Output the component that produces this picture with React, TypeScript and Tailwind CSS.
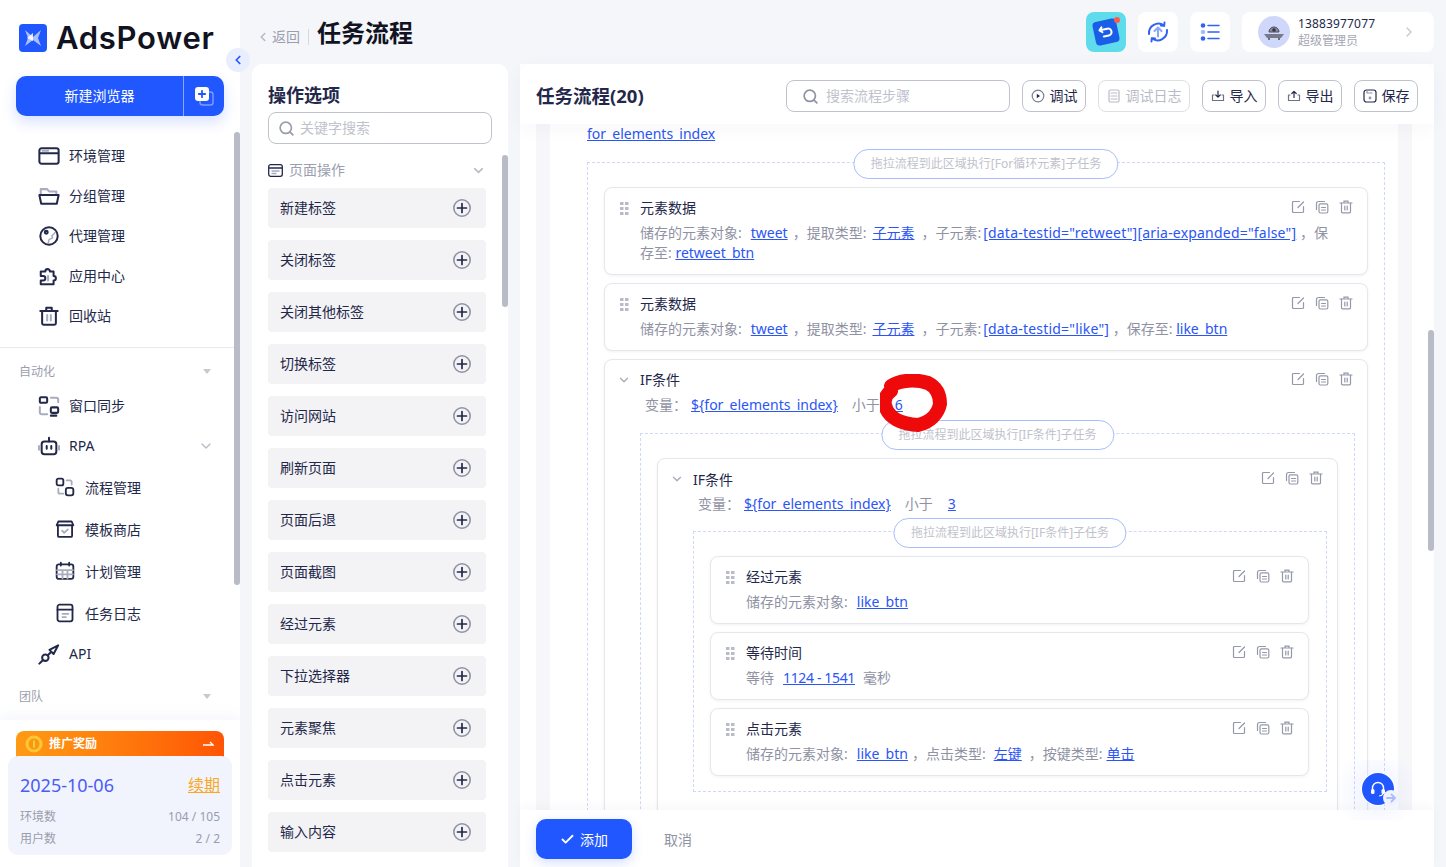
import { Check, ChevronDown, ChevronLeft, ChevronRight, Search } from "lucide-react";
import type { ReactNode } from "react";

const navy = "#23284a";
const soft = "#a9acbd";

function Ico({ children, size = 22 }: { children: ReactNode; size?: number }) {
  return (
    <svg width={size} height={size} viewBox="0 0 24 24" fill="none" stroke={navy} strokeWidth="2.200" strokeLinecap="round" strokeLinejoin="round" aria-hidden>
      {children}
    </svg>
  );
}

function navIcon(name: string, size: number): ReactNode {
  switch (name) {
    case "env":
      return (
        <Ico size={size}>
          <rect x="1.500" y="3.500" width="21" height="17" rx="2.500" />
          <path d="M2 9h20" />
          <path d="M5 6.300h6" stroke={soft} strokeDasharray="1.500 1" />
        </Ico>
      );
    case "group":
      return (
        <Ico size={size}>
          <path d="M3 10V4.500h7l2 2.500h8v3" stroke={soft} />
          <path d="M1.500 11h21l-2 9.500h-17z" />
        </Ico>
      );
    case "proxy":
      return (
        <Ico size={size}>
          <circle cx="12" cy="12" r="9.500" />
          <circle cx="9" cy="8" r="1.600" />
          <path d="M19 8l-4 4 1 2-4 2-1 4" stroke={soft} strokeWidth="1.600" />
        </Ico>
      );
    case "apps":
      return (
        <Ico size={size}>
          <path d="M3 7h5a2.500 2.500 0 1 1 5 0h4v5a2.500 2.500 0 1 1 0 5v4H3v-4h2.500a2.500 2.500 0 0 0 0-5H3z" />
          <path d="M11 12v5" stroke={soft} />
        </Ico>
      );
    case "trash":
      return (
        <Ico size={size}>
          <path d="M2.500 6.500h19M9 6V3h6v3" />
          <path d="M4.500 7v13a1.500 1.500 0 0 0 1.500 1.500h12a1.500 1.500 0 0 0 1.500-1.500V7" />
          <path d="M10 11v6M14 11v6" stroke={soft} />
        </Ico>
      );
    case "sync":
      return (
        <Ico size={size}>
          <rect x="2" y="2.500" width="8" height="6" rx="1.200" />
          <rect x="14" y="13.500" width="8" height="6" rx="1.200" />
          <path d="M14 3h6a2 2 0 0 1 2 2v3M10 21H4a2 2 0 0 1-2-2v-6" stroke={soft} />
          <path d="M14 22.500h6" />
        </Ico>
      );
    case "rpa":
      return (
        <Ico size={size}>
          <rect x="4" y="7" width="16" height="14" rx="3" />
          <path d="M12 3v4M9.500 12v3M14.500 12v3" />
          <path d="M1 12v4M23 12v4" stroke={soft} />
        </Ico>
      );
    case "flow":
      return (
        <Ico size={size}>
          <rect x="2" y="2" width="8" height="8" rx="2" />
          <rect x="13" y="13" width="9" height="9" rx="2.500" />
          <path d="M14 4h4a2 2 0 0 1 2 2v3M10 20H6a2 2 0 0 1-2-2v-4" stroke={soft} />
        </Ico>
      );
    case "store":
      return (
        <Ico size={size}>
          <path d="M2 7.500 4 3h16l2 4.500z" />
          <path d="M3.500 8v12a1.500 1.500 0 0 0 1.500 1.500h14a1.500 1.500 0 0 0 1.500-1.500V8" />
          <path d="m8.500 14 2.500 2.500 4.500-4" stroke={soft} />
        </Ico>
      );
    case "plan":
      return (
        <Ico size={size}>
          <rect x="2" y="4" width="20" height="17.500" rx="2.500" />
          <path d="M7 2v3.500M17 2v3.500" />
          <path d="M2.500 11h19M2.500 16h19M9 11v10M15 11v10" stroke={soft} />
        </Ico>
      );
    case "log":
      return (
        <Ico size={size}>
          <rect x="3" y="2" width="18" height="20" rx="2.500" />
          <path d="M3 8h18" />
          <path d="M9 13h7M9 17h4" stroke={soft} />
        </Ico>
      );
    default:
      return (
        <Ico size={size}>
          <path d="m1.500 22.500 4-4" />
          <circle cx="8" cy="16" r="3.500" />
          <path d="m11 13 3-3" />
          <path d="m12.500 7.500 4.500 4.500 5-9.500z" />
        </Ico>
      );
  }
}

function NavRow({ icon, label, sub, arrow }: { icon: string; label: string; sub?: boolean; arrow?: boolean }) {
  return (
    <div className={`flex items-center ${sub ? "h-[42px] pl-[53px]" : "h-10 pl-[37px]"} pr-[26px]`}>
      <div className="flex w-6 shrink-0 justify-center">{navIcon(icon, sub ? 20 : 22)}</div>
      <span className={`ml-[8px] text-[14px] text-[#23284a] ${sub ? "" : "pb-[2px]"}`}>{label}</span>
      {arrow && <ChevronDown className="ml-auto" size={16} color="#b9bbc6" />}
    </div>
  );
}

function SectionLabel({ label }: { label: string }) {
  return (
    <div className="flex h-6 items-center justify-between pl-[19px] pr-[29px]">
      <span className="pt-[1px] text-[12px] text-[#9b9eae]">{label}</span>
      <span className="h-0 w-0 border-x-[4px] border-t-[5px] border-x-transparent border-t-[#c6c8d2]" />
    </div>
  );
}

function Sidebar() {
  return (
    <aside className="relative z-10 flex h-full w-[240px] shrink-0 flex-col bg-white">
      <div className="flex h-[76px] items-start gap-[9px] pl-[19px] pt-[24px]">
        <svg width="28" height="28" viewBox="0 0 28 28" aria-hidden>
          <rect width="28" height="28" rx="4" fill="#2157ff" />
          <path d="M6 6 14 13 22 6 19 14 22 22 14 16 6 22 9 14z" fill="#a9c0ff" />
          <path d="M14 9 8 14l6 3z" fill="#fff" opacity=".85" />
        </svg>
        <span className="text-[31px] font-semibold leading-[28px] tracking-[0.7px] text-[#111322] font-['Inter',sans-serif]">AdsPower</span>
      </div>
      <div className="mx-4 flex h-10 shrink-0 items-stretch rounded-[10px] bg-[#2157ff] text-white shadow-[0_6px_14px_rgba(33,87,255,0.18)]">
        <div className="flex flex-1 items-center justify-center pb-[2px] text-[14px]">新建浏览器</div>
        <div className="flex w-[41px] items-center justify-center border-l border-[#8aa6ff]">
          <svg width="20" height="20" viewBox="0 0 20 20" aria-hidden>
            <rect x="6" y="6" width="13" height="13" rx="2.500" fill="none" stroke="#7f9dff" strokeWidth="1.400" />
            <rect x="1" y="1" width="14" height="14" rx="3" fill="#fff" />
            <path d="M8 4.800v6.400M4.800 8h6.400" stroke="#2157ff" strokeWidth="1.800" strokeLinecap="round" />
          </svg>
        </div>
      </div>
      <div className="min-h-0 flex-1 overflow-hidden pt-5">
        <NavRow icon="env" label="环境管理" />
        <NavRow icon="group" label="分组管理" />
        <NavRow icon="proxy" label="代理管理" />
        <NavRow icon="apps" label="应用中心" />
        <NavRow icon="trash" label="回收站" />
        <div className="mt-[11px] border-t border-[#e8e9ee] pt-[11px]">
          <SectionLabel label="自动化" />
          <div className="mt-[3px]">
            <NavRow icon="sync" label="窗口同步" />
            <NavRow icon="rpa" label="RPA" arrow />
            <NavRow icon="flow" label="流程管理" sub />
            <NavRow icon="store" label="模板商店" sub />
            <NavRow icon="plan" label="计划管理" sub />
            <NavRow icon="log" label="任务日志" sub />
            <NavRow icon="api" label="API" />
          </div>
          <div className="mt-[10px]">
            <SectionLabel label="团队" />
          </div>
        </div>
      </div>
      <div className="h-[147px] shrink-0 bg-white pt-[11px] shadow-[0_-6px_10px_rgba(245,246,250,0.8)]">
        <div className="mx-4 flex h-[29px] items-start justify-between rounded-t-[8px] bg-gradient-to-r from-[#ff9a14] to-[#ff5405] pl-2 pr-[10px] pt-[3px] text-white">
          <div className="flex items-center gap-[5px]">
            <svg width="20" height="20" viewBox="0 0 20 20" aria-hidden>
              <circle cx="10" cy="10" r="8.500" fill="#ffc53a" />
              <circle cx="10" cy="10" r="5.500" fill="#f79a0a" />
              <path d="M10 6.500v7" stroke="#ffd766" strokeWidth="1.500" />
            </svg>
            <span className="text-[12px] font-bold">推广奖励</span>
          </div>
          <svg className="mt-[6px]" width="12" height="8" viewBox="0 0 12 8" fill="none" stroke="#fff" strokeWidth="1.300" aria-hidden>
            <path d="M1 5h10L8 2" />
          </svg>
        </div>
        <div className="mx-2 -mt-1 h-[99px] rounded-[10px] bg-[#f1f4fd] px-3 pt-[16px]">
          <div className="flex h-[26px] items-center justify-between">
            <span className="text-[18px] text-[#4b5cf5]">2025-10-06</span>
            <span className="text-[16px] text-[#f9a825] underline">续期</span>
          </div>
          <div className="mt-[8px] flex h-[22px] items-center justify-between text-[12px] text-[#9a9dab]">
            <span>环境数</span>
            <span>104 / 105</span>
          </div>
          <div className="flex h-[22px] items-center justify-between text-[12px] text-[#9a9dab]">
            <span>用户数</span>
            <span>2 / 2</span>
          </div>
        </div>
      </div>
      <div className="absolute right-0 top-[132px] h-[453px] w-[6px] rounded-full bg-[#b9bbc6]" />
      <div className="absolute left-[226px] top-[48px] flex h-6 w-6 items-center justify-center rounded-full bg-[#e9eeff]">
        <ChevronLeft size={14} color="#2157ff" strokeWidth={3} />
      </div>
    </aside>
  );
}

function TopBar() {
  return (
    <header className="flex h-16 shrink-0 items-center pl-4">
      <ChevronLeft className="mt-[10px]" size={14} color="#b5b7c4" strokeWidth={2.500} />
      <span className="ml-[2px] mt-[8px] text-[14px] text-[#9b9eae]">返回</span>
      <span className="ml-[8px] mt-[10px] h-4 w-px bg-[#d8d9e0]" />
      <span className="ml-[8px] mt-[1px] text-[24px] font-bold leading-8 text-[#111322]">任务流程</span>
      <div className="ml-auto flex items-center gap-3">
        <div className="relative flex h-10 w-10 items-center justify-center rounded-[8px] bg-[#5edcec]">
          <div className="flex h-6 w-6 rotate-[-12deg] items-center justify-center rounded-[4px] bg-[#1a5ee8]">
            <svg width="16" height="16" viewBox="0 0 16 16" fill="none" stroke="#fff" strokeWidth="2" strokeLinecap="round" strokeLinejoin="round" aria-hidden>
              <path d="M2 5h8a3.500 3.500 0 0 1 0 7H5M4.500 2.500 2 5l2.500 2.500" />
            </svg>
          </div>
          <span className="absolute right-[6px] top-[5px] h-[6px] w-[6px] rounded-full bg-[#ff5a45]" />
        </div>
        <div className="flex h-10 w-10 items-center justify-center rounded-[8px] bg-white">
          <svg width="24" height="24" viewBox="0 0 24 24" fill="none" stroke="#2f62f5" strokeWidth="2" strokeLinecap="round" strokeLinejoin="round" aria-hidden>
            <path d="M3 14a9.500 9.500 0 0 1 15-8.500M21 10a9.500 9.500 0 0 1-15 8.500" />
            <path d="m18.500 2.500-.3 3.300-3.300-.3M5.500 21.500l.3-3.300 3.300.3" />
            <path d="M12 16.500V8M8.500 11 12 7.500l3.500 3.500" stroke="#8aa6ff" />
          </svg>
        </div>
        <div className="flex h-10 w-10 items-center justify-center rounded-[8px] bg-white">
          <svg width="20" height="20" viewBox="0 0 20 20" fill="none" aria-hidden>
            <circle cx="3" cy="3.500" r="2.300" fill="#2f62f5" />
            <circle cx="3" cy="10" r="2.300" fill="#a9bdfa" />
            <circle cx="3" cy="16.500" r="2.300" fill="#2f62f5" />
            <path d="M8 3.500h11M8 10h11M8 16.500h11" stroke="#2f62f5" strokeWidth="1.600" strokeLinecap="round" />
          </svg>
        </div>
        <div className="flex h-10 w-[192px] items-center rounded-[8px] bg-white pl-4 pr-[17px]">
          <div className="flex h-8 w-8 shrink-0 items-center justify-center rounded-full bg-[#cfd8fa]">
            <svg width="24" height="24" viewBox="0 0 24 24" aria-hidden>
              <path d="M7 12a5 5 0 0 1 10 0z" fill="#8b8e9c" stroke="#4a4d5c" strokeWidth="1" />
              <path d="M2 14h20l-3 4H5z" fill="#77798a" />
              <circle cx="12" cy="10" r="1.800" fill="#33364a" />
              <path d="M7 18v2M17 18v2" stroke="#4a4d5c" strokeWidth="1.500" />
            </svg>
          </div>
          <div className="ml-2 flex flex-col">
            <span className="text-[12px] leading-[17px] tracking-[0.15px] text-[#23284a]">13883977077</span>
            <span className="text-[12px] leading-[17px] text-[#a3a6b4]">超级管理员</span>
          </div>
          <ChevronRight className="ml-auto" size={16} color="#c6c8d2" />
        </div>
      </div>
    </header>
  );
}

const operations = ["新建标签", "关闭标签", "关闭其他标签", "切换标签", "访问网站", "刷新页面", "页面后退", "页面截图", "经过元素", "下拉选择器", "元素聚焦", "点击元素", "输入内容"];

function OptionsPanel() {
  return (
    <section className="relative w-[256px] shrink-0 overflow-hidden rounded-t-[10px] bg-white px-4 pt-[18px]">
      <h2 className="text-[18px] font-bold leading-[26px] text-[#23284a]">操作选项</h2>
      <div className="mt-1 flex h-8 items-center rounded-[8px] border border-[#c0c2cc] pl-[9px]">
        <Search size={17} color="#9a9dab" strokeWidth={2.400} />
        <span className="ml-[5px] pb-[2px] text-[14px] text-[#c0c2cc]">关键字搜索</span>
      </div>
      <div className="mt-[15px] flex h-[22px] items-center pr-[6px]">
        <svg width="15" height="13" viewBox="0 0 15 13" fill="none" stroke={navy} strokeWidth="1.300" aria-hidden>
          <rect x=".7" y=".7" width="13.600" height="11.600" rx="2" />
          <path d="M1 4h13" />
          <path d="M3.500 7h8M3.500 9.500h5" stroke={soft} />
        </svg>
        <span className="ml-[6px] pb-[2px] text-[14px] text-[#9b9eae]">页面操作</span>
        <ChevronDown className="ml-auto" size={15} color="#b9bbc6" strokeWidth={2.500} />
      </div>
      <div className="mt-[7px] flex w-[218px] flex-col gap-3">
        {operations.map((op) => (
          <div key={op} className="flex h-10 shrink-0 items-center justify-between rounded-[4px] bg-[#f3f3f5] pl-3 pr-[15px]">
            <span className="pb-[2px] text-[14px] text-[#23284a]">{op}</span>
            <svg width="18" height="18" viewBox="0 0 18 18" fill="none" aria-hidden>
              <circle cx="9" cy="9" r="8.200" stroke="#8f92a3" strokeWidth="1.600" />
              <path d="M9 4.500v9M4.500 9h9" stroke={navy} strokeWidth="1.700" strokeLinecap="round" />
            </svg>
          </div>
        ))}
      </div>
      <div className="absolute right-0 top-[91px] h-[152px] w-[6px] rounded-full bg-[#b9bbc6]" />
    </section>
  );
}

function ToolButton({ icon, label, off, wide }: { icon: ReactNode; label: string; off?: boolean; wide?: boolean }) {
  return (
    <div className={`flex h-8 items-center justify-center gap-[5px] rounded-[8px] border text-[14px] ${wide ? "w-[92px]" : "w-16"} ${off ? "border-[#dfe0e6] text-[#b9bbc6]" : "border-[#c0c2cc] text-[#23284a]"}`}>
      {icon}
      <span className="pb-[2px]">{label}</span>
    </div>
  );
}

function FlowHeader() {
  const s = { width: 14, height: 14, viewBox: "0 0 14 14", fill: "none", strokeWidth: 1.200, strokeLinecap: "round" as const, strokeLinejoin: "round" as const };
  return (
    <div className="relative z-20 flex h-[60px] shrink-0 items-center rounded-t-[10px] bg-white pl-4 pr-4 pt-1 shadow-[0_4px_20px_rgba(30,40,90,0.04)]">
      <h2 className="text-[18.500px] font-bold text-[#23284a]">任务流程(20)</h2>
      <div className="ml-auto mr-3 flex h-8 w-[224px] items-center rounded-[8px] border border-[#c0c2cc] pl-[15px]">
        <Search size={17} color="#8f92a3" strokeWidth={2.400} />
        <span className="ml-[7px] pb-[2px] text-[14px] text-[#c0c2cc]">搜索流程步骤</span>
      </div>
      <div className="flex gap-3">
        <ToolButton
          label="调试"
          icon={
            <svg {...s} stroke="#7d8092">
              <circle cx="7" cy="7" r="5.800" />
              <path d="M5.800 4.800 9 7l-3.200 2.200z" fill={navy} stroke="none" />
            </svg>
          }
        />
        <ToolButton
          off
          wide
          label="调试日志"
          icon={
            <svg {...s} stroke="#b9bbc6">
              <rect x="2" y="1" width="10" height="12" rx="1.500" />
              <path d="M4 4h6M4 7h6M4 10h6" />
            </svg>
          }
        />
        <ToolButton
          label="导入"
          icon={
            <svg {...s} stroke="#6f7284">
              <path d="M3 6H1.500v5.500h11V6H11" />
              <path d="M7 2v6M4.800 6 7 8.200 9.200 6" stroke={navy} />
            </svg>
          }
        />
        <ToolButton
          label="导出"
          icon={
            <svg {...s} stroke="#6f7284">
              <path d="M3 6H1.500v5.500h11V6H11" />
              <path d="M7 8.500V2.500M4.800 4.500 7 2.300l2.200 2.200" stroke={navy} />
            </svg>
          }
        />
        <ToolButton
          label="保存"
          icon={
            <svg {...s} stroke={navy}>
              <rect x="1" y="1" width="12" height="12" rx="2.500" />
              <path d="M4 1.500v2.500h5" stroke="#8f92a3" />
              <circle cx="7" cy="9" r=".8" stroke="#8f92a3" />
            </svg>
          }
        />
      </div>
    </div>
  );
}

function Lnk({ children, className = "" }: { children: ReactNode; className?: string }) {
  return <span className={`text-[#2b55f5] underline ${className}`}>{children}</span>;
}

function CardActions() {
  return (
    <div className="absolute right-[14px] top-[12px] flex gap-[10px]">
      <svg width="14" height="14" viewBox="0 0 14 14" fill="none" stroke="#9598a8" strokeWidth="1.200" strokeLinecap="round" aria-hidden>
        <path d="M12.500 6.500v5a1 1 0 0 1-1 1h-9a1 1 0 0 1-1-1v-9a1 1 0 0 1 1-1h6" />
        <path d="m7 7.500 5.500-5.500" />
      </svg>
      <svg width="14" height="14" viewBox="0 0 14 14" fill="none" stroke="#9598a8" strokeWidth="1.200" strokeLinecap="round" aria-hidden>
        <path d="M9.500 1.500h-6a2 2 0 0 0-2 2v6" />
        <rect x="4" y="3.800" width="8.800" height="9.200" rx="1.500" />
        <path d="M6.500 7.500h4M6.500 10h4" />
      </svg>
      <svg width="14" height="14" viewBox="0 0 14 14" fill="none" stroke="#9598a8" strokeWidth="1.200" strokeLinecap="round" aria-hidden>
        <path d="M1 3h12M5 3V1.200h4V3" />
        <path d="M2.500 3v8.800a1 1 0 0 0 1 1h7a1 1 0 0 0 1-1V3" />
        <path d="M5.800 6v4M8.200 6v4" />
      </svg>
    </div>
  );
}

function Grip() {
  return (
    <svg className="absolute left-[15px] top-[14px]" width="9" height="13" viewBox="0 0 9 13" fill="#b9bbc6" aria-hidden>
      <rect width="3.500" height="3" />
      <rect x="5" width="3.500" height="3" />
      <rect y="5" width="3.500" height="3" />
      <rect x="5" y="5" width="3.500" height="3" />
      <rect y="10" width="3.500" height="3" />
      <rect x="5" y="10" width="3.500" height="3" />
    </svg>
  );
}

function StepCard({ title, children }: { title: string; children: ReactNode }) {
  return (
    <div className="relative rounded-[8px] border border-[#e6e7ec] bg-white pb-[11px] pl-[35px] pr-[26px] pt-[10px] shadow-[0_1px_3px_rgba(30,40,90,0.06)]">
      <Grip />
      <CardActions />
      <div className="text-[14px] leading-5 text-[#23284a]">{title}</div>
      <div className="mt-[5px] text-[14px] leading-5 text-[#8f92a3]">{children}</div>
    </div>
  );
}

function DropZone({ label, children, className = "" }: { label: string; children: ReactNode; className?: string }) {
  return (
    <div className={`relative border border-dashed border-[#cfd8fb] pl-4 pt-6 ${className}`}>
      <div className="absolute left-1/2 top-[-14px] flex h-[30px] -translate-x-1/2 items-center whitespace-nowrap rounded-full border border-[#a9bdfa] bg-white px-[16.500px] text-[12px] text-[#c0c2cc]">
        {label}
      </div>
      {children}
    </div>
  );
}

function IfCard({ value, inner, children }: { value: string; inner?: boolean; children: ReactNode }) {
  return (
    <div className={`relative rounded-[8px] border border-[#e6e7ec] bg-white shadow-[0_1px_3px_rgba(30,40,90,0.06)] ${inner ? "pb-10 pt-[11px]" : "pt-[10px]"}`}>
      <CardActions />
      <ChevronDown className="absolute left-[12px] top-[13px]" size={14} color="#a9acbd" strokeWidth={2.400} />
      <div className="pl-[35px] text-[14px] leading-5 text-[#23284a]">IF条件</div>
      <div className={`${inner ? "mt-[4px]" : "mt-[5px]"} pl-10 text-[14px] leading-5 text-[#8f92a3]`}>
        变量：
        <Lnk className="ml-[4px]">{"${for_elements_index}"}</Lnk>
        <span className="ml-[14px]">小于</span>
        <Lnk className="ml-[15px]">{value}</Lnk>
      </div>
      {children}
    </div>
  );
}

function FlowCanvas() {
  return (
    <div className="relative min-h-0 flex-1 overflow-hidden pl-4 pr-[22px]">
      <div className="h-full bg-[#f7f7f9] px-[14px]">
        <div className="h-full bg-white pl-[37px] pr-[13px]">
          <div className="flex h-[18px] items-center text-[14px]">
            <Lnk>for_elements_index</Lnk>
          </div>
          <div className="mt-5">
            <DropZone label="拖拉流程到此区域执行[For循环元素]子任务" className="pr-4">
              <div className="flex flex-col gap-2">
                <StepCard title="元素数据">
                  储存的元素对象:<Lnk className="ml-[9px] mr-[5px]">tweet</Lnk>，提取类型:<Lnk className="ml-[6px] mr-[7px]">子元素</Lnk>，子元素:<Lnk className="ml-[2px] tracking-[0.2px]">[data-testid="retweet"][aria-expanded="false"]</Lnk> ，保存至: <Lnk>retweet_btn</Lnk>
                </StepCard>
                <StepCard title="元素数据">
                  储存的元素对象:<Lnk className="ml-[9px] mr-[5px]">tweet</Lnk>，提取类型:<Lnk className="ml-[6px] mr-[7px]">子元素</Lnk>，子元素:<Lnk className="ml-[2px] tracking-[0.2px]">[data-testid="like"]</Lnk> ，保存至: <Lnk>like_btn</Lnk>
                </StepCard>
                <IfCard value="6">
                  <DropZone label="拖拉流程到此区域执行[IF条件]子任务" className="ml-[35px] mr-3 mt-[18px] pr-4">
                    <IfCard value="3" inner>
                      <DropZone label="拖拉流程到此区域执行[IF条件]子任务" className="ml-[35px] mr-[10px] mt-[17px] pb-[15px] pr-[17px]">
                        <div className="flex flex-col gap-2">
                          <StepCard title="经过元素">
                            储存的元素对象:<Lnk className="ml-[9px]">like_btn</Lnk>
                          </StepCard>
                          <StepCard title="等待时间">
                            等待<Lnk className="ml-[9px] mr-[8px] tracking-[-0.35px]">1124 - 1541</Lnk>毫秒
                          </StepCard>
                          <StepCard title="点击元素">
                            储存的元素对象:<Lnk className="ml-[9px] mr-[4px]">like_btn</Lnk>，点击类型:<Lnk className="ml-[8px] mr-[7px]">左键</Lnk>，按键类型:<Lnk className="ml-[4px]">单击</Lnk>
                          </StepCard>
                        </div>
                      </DropZone>
                    </IfCard>
                  </DropZone>
                </IfCard>
              </div>
            </DropZone>
          </div>
        </div>
      </div>
      {/* hand drawn marker in the screenshot */}
      <svg className="absolute left-[360px] top-[250px]" width="70" height="60" viewBox="0 0 70 60" fill="none" aria-hidden>
        <path d="M11 17C6 20 4 26 5 31c3 13 17 19 33 20 12-3 20-11 22-21 0-10-4-17-12-21C36 5 20 6 11 12" stroke="#ee0a0a" strokeWidth="14" strokeLinecap="round" strokeLinejoin="round" />
      </svg>
      <div className="absolute right-0 top-[206px] h-[221px] w-[6px] rounded-full bg-[#b9bbc6]" />
    </div>
  );
}

function FlowPanel() {
  return (
    <section className="relative flex min-w-0 flex-1 flex-col bg-white">
      <FlowHeader />
      <FlowCanvas />
      <div className="relative z-20 flex h-[57px] shrink-0 items-start bg-white pl-4 pt-[9px] shadow-[0_-4px_12px_rgba(30,40,90,0.03)]">
        <div className="flex h-10 w-24 items-center justify-center gap-[5px] rounded-[10px] bg-[#2157ff] text-[14px] text-white shadow-[0_4px_12px_rgba(33,87,255,0.18)]">
          <Check size={15} strokeWidth={3} />
          <span>添加</span>
        </div>
        <div className="ml-8 flex h-10 items-center text-[14px] text-[#8f92a3]">取消</div>
      </div>
      {/* floating support button */}
      <div className="absolute right-[6px] top-[696px] z-30 h-[60px] w-[104px] bg-[radial-gradient(circle,rgba(33,87,255,0.08),transparent_70%)]" />
      <div className="absolute right-[40px] top-[709px] z-30 flex h-8 w-8 items-center justify-center rounded-full bg-[#2157ff] shadow-[0_0_0_1px_#fff]">
        <svg width="18" height="18" viewBox="0 0 18 18" fill="none" aria-hidden>
          <path d="M3.500 10V8a5.500 5.500 0 0 1 11 0v2" stroke="#fff" strokeWidth="1.400" />
          <rect x="2" y="9" width="3.500" height="5" rx="1.500" fill="#fff" />
          <rect x="12.500" y="9" width="3.500" height="5" rx="1.500" fill="#fff" />
          <path d="M14 14c-1 1.500-2 2-4 2" stroke="#fff" strokeWidth="1.200" />
        </svg>
      </div>
      <div className="absolute right-[35px] top-[726px] z-30 flex h-4 w-4 items-center justify-center rounded-full bg-[#f0f3ff]">
        <svg width="10" height="10" viewBox="0 0 10 10" fill="none" stroke="#a9bdfa" strokeWidth="1.800" strokeLinecap="round" strokeLinejoin="round" aria-hidden>
          <path d="M1 5h8M5.500 1.500 9 5 5.500 8.500" />
        </svg>
      </div>
    </section>
  );
}

export default function App() {
  return (
    <div className="flex h-[867px] w-[1446px] overflow-hidden bg-[#f5f6fa] font-['Noto_Sans','Noto_Sans_CJK_SC',sans-serif]">
      <Sidebar />
      <main className="flex min-w-0 flex-1 flex-col pr-3">
        <TopBar />
        <div className="flex min-h-0 flex-1 gap-3 pl-3">
          <OptionsPanel />
          <FlowPanel />
        </div>
      </main>
    </div>
  );
}
